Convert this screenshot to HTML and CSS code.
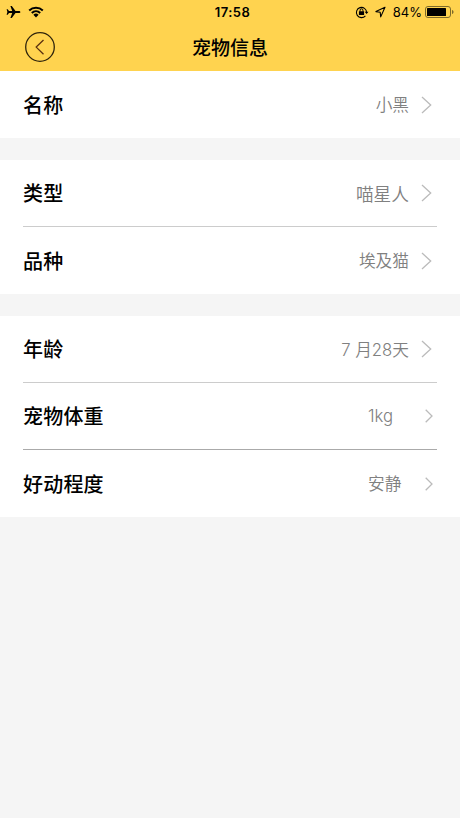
FILE: index.html
```html
<!DOCTYPE html>
<html lang="zh-CN">
<head>
    <meta charset="UTF-8">
    <meta name="viewport" content="width=device-width, initial-scale=1.0">
    <title>宠物信息</title>
    <link rel="stylesheet" href="styles.css">
</head>
<body>

    <header class="header">
        <div class="status-bar">
            <div class="status-left">
                <svg width="15" height="14" viewBox="0 0 15 14">
                    <path d="M14.4 7c0-.7-.7-1.1-1.5-1.1H9.5L5.8 1H4.4l1.8 4.9H3L1.7 4.2H.6L1.4 7l-.8 2.8h1.1L3 8.1h3.2L4.4 13h1.4l3.7-4.9h3.4c.8 0 1.5-.4 1.5-1.1z"/>
                </svg>
                <svg width="16" height="12" viewBox="0 0 16 12">
                    <path d="M1.2 4.5a9.8 9.8 0 0 1 13.6 0M3.8 7a6.2 6.2 0 0 1 8.4 0" fill="none" stroke="#000" stroke-width="2"/>
                    <path d="M5.4 8.8a3.8 3.8 0 0 1 5.2 0L8 11.4z"/>
                </svg>
            </div>
            <span class="time">17:58</span>
            <div class="status-right">
                <svg width="14" height="14" viewBox="0 0 14 14">
                    <path d="M10.4 10.8a5.1 5.1 0 1 1 1.2-3.4" fill="none" stroke="#000" stroke-width="1.1"/>
                    <path d="M9.7 6.7h3.8l-1.9 2.4zM3.9 6.3h5.2v3.8H3.9z"/>
                    <path d="M5.1 6.5V5.2a1.4 1.4 0 0 1 2.8 0v1.3" fill="none" stroke="#000"/>
                </svg>
                <svg class="location" width="11" height="12" viewBox="0 0 11 12">
                    <path d="M10 1.2L.9 5.6l4.3.6.5 4.7z" fill="none" stroke="#000" stroke-width="1.1" stroke-linejoin="round"/>
                </svg>
                <span class="percent">84%</span>
                <svg width="29" height="12" viewBox="0 0 29 12">
                    <rect x=".5" y=".5" width="25" height="11" rx="2.5" fill="none" stroke="#7d6a2a"/>
                    <rect x="2" y="2" width="19" height="8" rx=".6"/>
                    <path d="M27 4v4c1-.4 1.5-1.1 1.5-2S28 4.4 27 4z" fill="#7d6a2a"/>
                </svg>
            </div>
        </div>
        <div class="nav-bar">
            <a class="back" href="#">
                <svg width="32" height="32" viewBox="0 0 32 32" fill="none">
                    <circle cx="16" cy="16" r="14.3" stroke="#30250c" stroke-width="1.3"/>
                    <path d="M19.5 9l-7.3 7.1 7.3 7.1" stroke="#5a3010" stroke-width="1.3"/>
                </svg>
            </a>
            <h1>宠物信息</h1>
        </div>
    </header>

    <main>
        <div class="group">
            <div class="row">
                <span class="label">名称</span>
                <span class="value">小黑</span>
                <svg class="arrow" viewBox="0 0 11 18"><path d="M1 1l8.7 8L1 17"/></svg>
            </div>
        </div>

        <div class="group">
            <div class="row">
                <span class="label">类型</span>
                <span class="value wide">喵星人</span>
                <svg class="arrow" viewBox="0 0 11 18"><path d="M1 1l8.7 8L1 17"/></svg>
            </div>
            <div class="row">
                <span class="label">品种</span>
                <span class="value">埃及猫</span>
                <svg class="arrow" viewBox="0 0 11 18"><path d="M1 1l8.7 8L1 17"/></svg>
            </div>
        </div>

        <div class="group">
            <div class="row">
                <span class="label">年龄</span>
                <span class="value">7 月28天</span>
                <svg class="arrow" viewBox="0 0 11 18"><path d="M1 1l8.7 8L1 17"/></svg>
            </div>
            <div class="row dark-line">
                <span class="label">宠物体重</span>
                <span class="value picker">1kg</span>
                <svg class="arrow small" viewBox="0 0 8 14"><path d="M.7.7L7 7 .7 13.3"/></svg>
            </div>
            <div class="row">
                <span class="label">好动程度</span>
                <span class="value picker">安静</span>
                <svg class="arrow small" viewBox="0 0 8 14"><path d="M.7.7L7 7 .7 13.3"/></svg>
            </div>
        </div>
    </main>

</body>
</html>
```

FILE: styles.css
```css
* {
    box-sizing: border-box;
}

body {
    margin: 0;
    background-color: #f5f5f5;
    font-family: Inter, 'Noto Sans CJK SC', sans-serif;
    color: #000;
}

svg {
    display: block;
    flex: none;
}

.header {
    height: 71px;
    background-color: #ffd34f;
}

.status-bar {
    display: grid;
    grid-template-columns: 1fr auto 1fr;
    align-items: center;
    height: 23px;
    padding: 0 6px 0 6px;
}

.status-left,
.status-right {
    display: flex;
    align-items: center;
}

.status-left {
    gap: 7px;
}

.status-right {
    justify-content: flex-end;
}

.location {
    margin: 0 7px 0 6px;
}

.time {
    padding-left: 5px;
    font-size: 13px;
    font-weight: 600;
    letter-spacing: 0.5px;
}

.percent {
    margin-right: 3px;
    font-size: 13px;
}

.nav-bar {
    display: grid;
    grid-template-columns: 32px 1fr 32px;
    align-items: center;
    height: 48px;
    padding: 0 24px;
}

.nav-bar h1 {
    margin: 0;
    padding-top: 3px;
    font-size: 19px;
    font-weight: 500;
    line-height: 28px;
    text-align: center;
}

.group {
    margin-bottom: 22px;
    padding: 0 23px;
    background-color: #fff;
}

.row {
    display: flex;
    align-items: center;
    height: 67px;
    padding-right: 5px;
}

.row:not(:last-child) {
    border-bottom: 1px solid #ccc;
}

.row.dark-line {
    border-bottom-color: #aaa;
}

.label {
    flex: 1;
    padding-bottom: 1px;
    font-size: 20px;
    font-weight: 500;
    letter-spacing: 0.2px;
}

.value {
    margin-right: 12px;
    padding-bottom: 1px;
    font-size: 16.7px;
    font-weight: 350;
    color: #808080;
}

.value.wide {
    font-size: 17.7px;
}

.value.picker {
    width: 45px;
}

.arrow {
    width: 11px;
    height: 18px;
    fill: none;
    stroke: #bbb;
    stroke-width: 1.3;
}

.arrow.small {
    width: 8px;
    height: 14px;
    margin-right: -1px;
}
```
